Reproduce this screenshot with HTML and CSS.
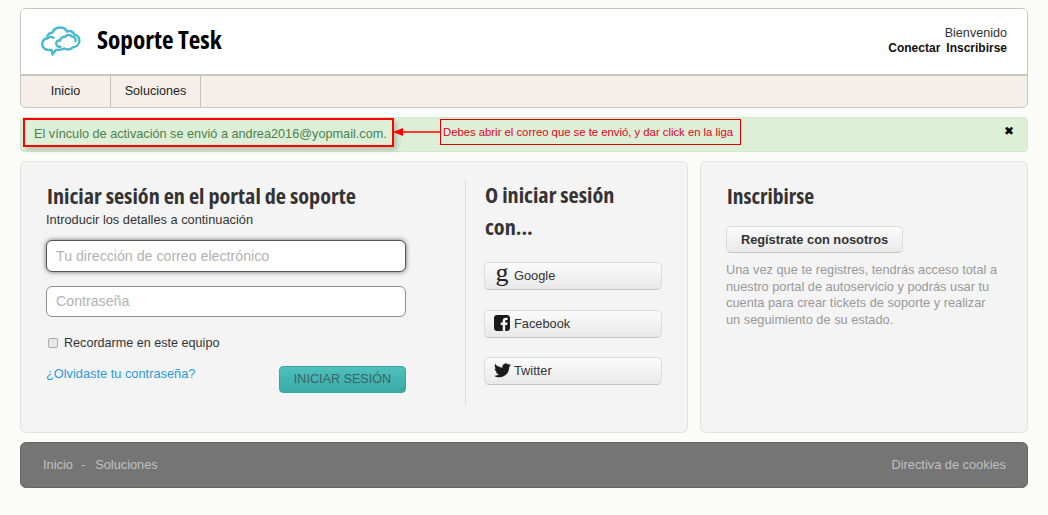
FILE: index.html
```html
<!DOCTYPE html>
<html lang="es">
<head>
<meta charset="utf-8">
<title>Soporte Tesk</title>
<link rel="stylesheet" href="styles.css">
</head>
<body>
<div class="page">
  <header class="head-card">
    <div class="brand-bar">
      <div class="brand">
        <svg class="logo" width="40" height="30" viewBox="0 0 42 32" fill="none" stroke="#4cb8cf" stroke-width="2.600" stroke-linejoin="round" stroke-linecap="round">
          <path d="M11 25.500H8C3.500 25.500 1 22.500 1 19C1 15.500 3.500 13.500 6.500 13C6 9 9 7 11.500 7.500C13 3.500 16.500 1.500 20 1.500C23.500 1.500 26.500 3.500 27.500 6C30 4.500 34 5.500 35 9C38.500 9.500 41 12.500 40.500 16.500C40 20.500 37 22.500 34 22.500C31.500 25 27.500 25.500 24.500 24C21.500 25.500 18.500 25.500 15.500 25.500L12 30.500L11 25.500Z"/>
          <path d="M6.500 13C8 11.500 11 11 13 12.500M20 15.500C20.500 12.500 23 11 25.500 11.500C27 9 31 9 33 11.500C35.500 11.500 37 13.500 36.500 16M20 15.500C17 15 15.500 17 16 19.500C16.500 21.500 18.500 22.500 20.500 22"/>
        </svg>
        <span class="brand-name">Soporte Tesk</span>
      </div>
      <div class="user-box">
        <div>Bienvenido</div>
        <div class="user-links"><a href="#">Conectar</a><a href="#">Inscribirse</a></div>
      </div>
    </div>
    <nav class="nav">
      <a class="nav-item nav-home" href="#">Inicio</a>
      <a class="nav-item nav-sol" href="#">Soluciones</a>
    </nav>
  </header>

  <div class="alert">
    <span class="alert-text">El vínculo de activación se envió a andrea2016@yopmail.com.</span>
    <span class="alert-close">✖</span>
    <div class="mark-box"></div>
    <svg class="mark-arrow" width="48" height="12" viewBox="0 0 48 12">
      <path d="M0 6L10 2V5.200H48V6.800H10V10Z" fill="#f00"/>
    </svg>
    <div class="mark-note">Debes abrir el correo que se te envió, y dar click en la liga</div>
  </div>

  <main class="panels">
    <section class="panel panel-login">
      <div class="login-form">
        <h2 class="title title-login">Iniciar sesión en el portal de soporte</h2>
        <p class="subtitle">Introducir los detalles a continuación</p>
        <input class="field field-focus" type="text" placeholder="Tu dirección de correo electrónico">
        <input class="field field-pass" type="text" placeholder="Contraseña">
        <label class="remember"><input class="check" type="checkbox"><span>Recordarme en este equipo</span></label>
        <div class="form-foot">
          <a class="forgot" href="#">¿Olvidaste tu contraseña?</a>
          <button class="submit" type="button">INICIAR SESIÓN</button>
        </div>
      </div>
      <div class="social">
        <h2 class="title title-social">O iniciar sesión con...</h2>
        <a class="soc-btn" href="#">
          <span class="soc-icon"><span class="g-glyph">g</span></span>Google
        </a>
        <a class="soc-btn" href="#">
          <span class="soc-icon">
            <svg width="16" height="16" viewBox="0 0 16 16"><path fill="#1a1a1a" d="M3 0H13C14.700 0 16 1.300 16 3V13C16 14.700 14.700 16 13 16H11.200V10H13.200L13.500 7.600H11.200V6.200C11.200 5.500 11.500 5 12.400 5H13.600V2.900C13.200 2.800 12.500 2.800 11.800 2.800C10 2.800 8.700 3.900 8.700 5.900V7.600H6.700V10H8.700V16H3C1.300 16 0 14.700 0 13V3C0 1.300 1.300 0 3 0Z"/></svg>
          </span>Facebook
        </a>
        <a class="soc-btn" href="#">
          <span class="soc-icon">
            <svg width="17" height="15" viewBox="0 0 24 20"><path fill="#1a1a1a" d="M24 2.400C23.100 2.800 22.200 3.100 21.200 3.200C22.200 2.600 23 1.600 23.400 0.500C22.400 1.100 21.400 1.500 20.300 1.700C19.400 0.700 18.100 0 16.700 0C14 0 11.800 2.200 11.800 4.900C11.800 5.300 11.900 5.700 11.900 6C7.800 5.800 4.200 3.900 1.700 0.900C1.300 1.600 1 2.500 1 3.400C1 5.100 1.900 6.600 3.200 7.500C2.400 7.500 1.600 7.300 1 6.900V7C1 9.400 2.700 11.300 4.900 11.800C4.100 12 3.200 12 2.700 11.900C3.300 13.900 5.100 15.300 7.300 15.300C5.600 16.600 3.500 17.400 1.200 17.400C0.800 17.400 0.400 17.400 0 17.300C2.200 18.700 4.800 19.500 7.500 19.500C16.600 19.500 21.500 12 21.500 5.500V4.900C22.500 4.200 23.300 3.400 24 2.400Z"/></svg>
          </span>Twitter
        </a>
      </div>
    </section>
    <aside class="panel panel-signup">
      <h2 class="title title-signup">Inscribirse</h2>
      <a class="signup-btn" href="#">Regístrate con nosotros</a>
      <p class="signup-text">Una vez que te registres, tendrás acceso total a nuestro portal de autoservicio y podrás usar tu cuenta para crear tickets de soporte y realizar un seguimiento de su estado.</p>
    </aside>
  </main>

  <footer class="foot">
    <div class="foot-links"><a href="#">Inicio</a><span class="foot-sep">-</span><a href="#">Soluciones</a></div>
    <a href="#">Directiva de cookies</a>
  </footer>
</div>
</body>
</html>
```
FILE: styles.css
```css
* { box-sizing: border-box; }
html, body { height: 100%; }
body {
  margin: 0;
  background: #fbfbfa;
  font-family: "Liberation Sans", Arial, sans-serif;
  font-size: 12.800px;
  color: #333;
  overflow: hidden;
}
a { text-decoration: none; color: inherit; }
.page { width: 1008px; margin: 8px 0 0 20px; display: flex; flex-direction: column; }

.head-card {
  height: 100px;
  border: 1px solid #c9c5c0;
  border-radius: 6px;
  overflow: hidden;
  background: #f6eee8;
  display: flex;
  flex-direction: column;
}
.brand-bar {
  height: 67px;
  background: #fff;
  border-bottom: 2px solid #cbc7c3;
  display: flex;
  justify-content: space-between;
  padding: 17px 20px 0 20px;
}
.brand { display: flex; align-items: flex-start; }
.brand-name {
  margin-left: 16px;
  font-family: "Open Sans", sans-serif;
  font-stretch: 75%;
  font-weight: 700;
  font-size: 25.200px;
  line-height: 27px;
  color: #000;
}
.user-box { text-align: right; font-size: 12.600px; line-height: 15px; color: #333; }
.user-links { font-weight: 700; font-size: 12px; color: #111; }
.user-links a { margin-left: 6px; }

.nav { display: flex; height: 31px; }
.nav-item {
  display: flex;
  align-items: center;
  justify-content: center;
  border-right: 1px solid #c6c1bb;
  font-size: 12.600px;
  color: #222;
  padding-bottom: 2px;
}
.nav-home { width: 90px; }
.nav-sol { width: 90px; }

.alert {
  position: relative;
  height: 35px;
  margin-top: 9px;
  background: #deefd8;
  border: 1px solid #d5e8cf;
  border-radius: 4px;
  display: flex;
  justify-content: space-between;
  padding: 9px 13px 0 13px;
  color: #4c7f50;
  font-size: 12.700px;
  line-height: 15px;
}
.alert-close { font-size: 12px; line-height: 11px; color: #000; margin-top: -1px; }
.mark-box {
  position: absolute;
  left: 2px;
  top: 0;
  width: 371px;
  height: 29px;
  border: 2px solid #f00;
  box-shadow: 3px 3px 5px rgba(0,0,0,.2);
}
.mark-arrow { position: absolute; left: 372px; top: 8px; }
.mark-note {
  position: absolute;
  left: 419px;
  top: 1px;
  width: 301px;
  height: 26px;
  border: 1px solid #e00000;
  color: #e2001a;
  font-size: 11.300px;
  line-height: 24px;
  padding-left: 2px;
  white-space: nowrap;
}

.panels { display: flex; gap: 12px; margin-top: 9px; height: 272px; }
.panel {
  background: #f4f4f4;
  border: 1px solid #e2e2e2;
  border-radius: 6px;
}
.panel-login { width: 668px; display: flex; padding: 18px 0 0 25px; }
.panel-signup { width: 328px; padding: 18px 25px 0 25px; }
.login-form { width: 360px; }
.title {
  margin: 0 0 0 1px;
  font-family: "Open Sans", sans-serif;
  font-stretch: 75%;
  font-weight: 700;
  font-size: 22.200px;
  line-height: 31px;
  color: #333;
}
.title-signup { font-size: 21.500px; }
.subtitle { margin: 2px 0 13px; font-size: 12.800px; line-height: 14px; color: #333; }
.field {
  display: block;
  width: 360px;
  height: 32px;
  border: 1px solid #8f8f8f;
  border-radius: 6px;
  background: #fff;
  padding: 0 9px;
  font: 14.200px "Liberation Sans", Arial, sans-serif;
  outline: none;
}
.field::placeholder { color: #b2b2b2; opacity: 1; }
.field-focus { border-color: #555; box-shadow: 0 0 5px rgba(0,0,0,.55); }
.field-pass { height: 31px; margin-top: 14px; padding-bottom: 2px; }
.remember { display: flex; align-items: center; margin: 18px 0 0 2px; font-size: 12.600px; line-height: 16px; color: #333; }
.check {
  appearance: none;
  margin: 0 6px 0 0;
  width: 10px;
  height: 10px;
  border: 1px solid #aaa;
  border-radius: 2px;
  background: #e8e8e8;
}
.form-foot { display: flex; justify-content: space-between; margin-top: 15px; }
.forgot { color: #2a9adf; font-size: 12.800px; line-height: 16px; }
.submit {
  width: 127px;
  height: 27px;
  margin-top: 0;
  border: 1px solid #3aa5a0;
  border-radius: 4px;
  background: linear-gradient(#4fc0bb, #38aba6);
  color: #3d6266;
  font: 12.600px "Liberation Sans", Arial, sans-serif;
  padding: 0 0 2px;
}
.social {
  width: 197px;
  height: 225px;
  margin-left: 59px;
  border-left: 1px solid #dcdcdc;
  padding-left: 18px;
}
.title-social { width: 170px; line-height: 32px; margin-top: -1px; }
.soc-btn {
  display: flex;
  align-items: center;
  width: 178px;
  height: 28px;
  margin-top: 19px;
  border: 1px solid #dcdcdc;
  border-bottom-color: #c4c4c4;
  border-radius: 5px;
  background: linear-gradient(#fbfbfb, #e9e9e9);
  font-size: 12.800px;
  color: #333;
  padding-bottom: 2px;
}
.soc-btn + .soc-btn { margin-top: 20px; }
.soc-btn:last-child { margin-top: 19px; }
.soc-icon { width: 29px; display: flex; justify-content: center; padding-left: 5px; }
.g-glyph { font-family: "Liberation Serif", serif; font-size: 26px; line-height: 20px; color: #222; margin-top: -5px; }
.signup-btn {
  display: flex;
  align-items: center;
  justify-content: center;
  width: 177px;
  height: 27px;
  margin-top: 15px;
  border: 1px solid #dcdcdc;
  border-bottom-color: #c4c4c4;
  border-radius: 5px;
  background: linear-gradient(#fbfbfb, #e9e9e9);
  font-weight: 700;
  font-size: 12.800px;
  color: #333;
}
.signup-text { margin: 9px 0 0; max-width: 272px; font-size: 12.800px; line-height: 16.700px; color: #999; }

.foot {
  height: 46px;
  margin-top: 9px;
  background: #757575;
  border: 1px solid #666;
  border-radius: 6px;
  display: flex;
  justify-content: space-between;
  align-items: center;
  padding: 0 21px 2px 22px;
  color: #c0c0c0;
  font-size: 12.800px;
}
.foot-sep { margin: 0 10px 0 8px; }
```
